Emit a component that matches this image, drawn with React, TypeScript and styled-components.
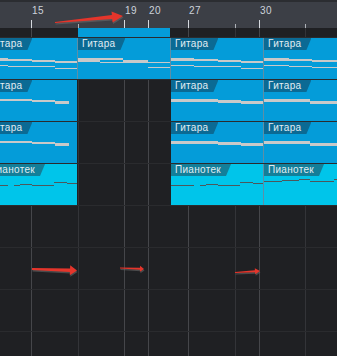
import React from 'react';
import styled, { createGlobalStyle } from 'styled-components';

type Seg = [number, number, number, number]; // x1, x2, y (from clip top), thickness
type Tone = 'guitar' | 'piano';
type ClipData = { tone: Tone; label?: string; lines: Seg[]; joined?: boolean } | null;

const TICKS = [
  { x: 31, label: '15' },
  { x: 78 },
  { x: 124, label: '19' },
  { x: 148, label: '20' },
  { x: 188, label: '27' },
  { x: 235 },
  { x: 259, label: '30' },
  { x: 305 },
];

const gridBg = TICKS.map((t) => {
  const c = t.label ? '#45464a' : '#333438';
  return `linear-gradient(${c}, ${c}) ${t.x}px 0 / 1px 100% no-repeat`;
}).join(', ');

const guitarTop: Seg[] = [
  [0, 23, 20, 3], [23, 47, 21, 2], [47, 70, 22, 2], [70, 92, 23, 2],
  [0, 23, 27, 1], [23, 47, 28, 1], [47, 70, 28, 1], [70, 92, 30, 1],
];
const guitarTopMid: Seg[] = [
  [0, 22, 20, 4], [22, 45, 20, 2], [45, 70, 22, 3], [70, 92, 24, 1],
  [22, 45, 24, 1], [70, 92, 29, 1],
];
const guitarTopEnd: Seg[] = [
  [0, 25, 20, 3], [25, 48, 21, 2], [48, 73, 22, 2], [73, 92, 23, 2],
  [0, 25, 27, 1], [25, 48, 28, 1], [48, 73, 29, 1],
];
const guitarLeft: Seg[] = [[0, 47, 19, 2], [47, 70, 20, 2], [70, 84, 21, 3]];
const guitar: Seg[] = [[0, 47, 19, 3], [47, 70, 20, 3], [70, 92, 21, 3]];
const guitarEnd: Seg[] = [[0, 46, 19, 3], [46, 92, 21, 3]];
const piano: Seg[] = [
  [0, 23, 21, 1], [29, 35, 21, 1], [35, 47, 20, 1], [47, 69, 21, 1], [69, 82, 18, 1], [82, 92, 19, 1],
];
const pianoEnd: Seg[] = [[0, 18, 17, 1], [18, 35, 16, 1], [35, 46, 15, 1], [46, 70, 17, 1], [70, 92, 15, 1]];

const g = (lines: Seg[], joined = false): ClipData => ({ tone: 'guitar', label: 'Гитара', lines, joined });
const p = (lines: Seg[], joined = false): ClipData => ({ tone: 'piano', label: 'Пианотек', lines, joined });

const LANES: { h: number; slots: ClipData[] }[] = [
  { h: 10, slots: [null, { tone: 'guitar', lines: [] }, null, null] },
  { h: 42, slots: [g(guitarTop), g(guitarTopMid, true), g(guitarTop, true), g(guitarTopEnd, true)] },
  { h: 42, slots: [g(guitarLeft), null, g(guitar), g(guitarEnd, true)] },
  { h: 42, slots: [g(guitarLeft), null, g(guitar), g(guitarEnd, true)] },
  { h: 42, slots: [p(piano), null, p(piano), p(pianoEnd, true)] },
  { h: 42, slots: [] },
  { h: 42, slots: [] },
  { h: 42, slots: [] },
  { h: 42, slots: [] },
];

const ARROWS = [
  { tail: [55, 22.5], tip: [123, 16], w0: 1, w1: 4, len: 11, half: 5.5 },
  { tail: [32, 269], tip: [77, 270.5], w0: 2, w1: 3.5, len: 7, half: 5 },
  { tail: [120, 268], tip: [144, 269], w0: 1, w1: 2, len: 4, half: 3 },
  { tail: [235, 272.5], tip: [260, 271], w0: 1.2, w1: 2, len: 5, half: 3 },
];

const GlobalStyle = createGlobalStyle`
  html, body { margin: 0; padding: 0; background: #1f2023; overflow: hidden; }
  * { box-sizing: border-box; }
`;

const Screen = styled.div`
  position: relative;
  width: 337px;
  height: 356px;
  overflow: hidden;
  background: #1f2023;
  font-family: "Liberation Sans", Arial, sans-serif;
`;

const Ruler = styled.div`
  position: relative;
  height: 28px;
  background: #3c3f46;
  border-top: 2px solid #2b2d31;
`;

const Tick = styled.div<{ $x: number; $bar: boolean }>`
  position: absolute;
  bottom: 0;
  left: ${(p) => p.$x}px;
  width: 1px;
  height: ${(p) => (p.$bar ? 8 : 4)}px;
  background: ${(p) => (p.$bar ? '#d6dadf' : '#aeb2b8')};
`;

const TickLabel = styled.span<{ $x: number }>`
  position: absolute;
  top: 4px;
  left: ${(p) => p.$x + 1}px;
  font-size: 10px;
  line-height: 10px;
  letter-spacing: 0.5px;
  color: #cdd3db;
`;

const Tracks = styled.div`
  height: 328px;
  background: ${gridBg};
`;

const Lane = styled.div<{ $h: number }>`
  display: flex;
  height: ${(p) => p.$h}px;
  border-bottom: 1px solid #2a2b2e;
  overflow: hidden;
`;

const Slot = styled.div`
  flex: 0 0 93px;
  &:first-child {
    margin-left: -16px;
  }
`;

const Clip = styled(Slot)<{ $tone: Tone; $joined: boolean }>`
  display: flex;
  flex-direction: column;
  align-items: flex-start;
  background: ${(p) => (p.$tone === 'piano' ? '#00c5ea' : '#049cd9')};
  background-clip: padding-box;
  border-left: 1px solid ${(p) => (p.$joined ? '#5e8ea6' : 'transparent')};
`;

const Tab = styled.span<{ $tone: Tone }>`
  height: 12px;
  padding: 0 10px 0 4px;
  font-size: 10px;
  line-height: 12px;
  letter-spacing: 0.3px;
  white-space: nowrap;
  color: #e2edf3;
  background: ${(p) => (p.$tone === 'piano' ? '#137f99' : '#0b6a94')};
  clip-path: polygon(0 0, 100% 0, calc(100% - 5px) 100%, 0 100%);
`;

const LineArt = styled.svg`
  display: block;
  flex: none;
`;

const Overlay = styled.svg`
  position: absolute;
  left: 0;
  top: 0;
  pointer-events: none;
`;

function arrowPoints(a: (typeof ARROWS)[number], dx = 0, dy = 0) {
  const [tx, ty] = a.tail;
  const [hx, hy] = a.tip;
  const l = Math.hypot(hx - tx, hy - ty);
  const ux = (hx - tx) / l;
  const uy = (hy - ty) / l;
  const nx = -uy;
  const ny = ux;
  const bx = hx - ux * a.len;
  const by = hy - uy * a.len;
  const pts = [
    [tx + (nx * a.w0) / 2, ty + (ny * a.w0) / 2],
    [bx + (nx * a.w1) / 2, by + (ny * a.w1) / 2],
    [bx + nx * a.half, by + ny * a.half],
    [hx, hy],
    [bx - nx * a.half, by - ny * a.half],
    [bx - (nx * a.w1) / 2, by - (ny * a.w1) / 2],
    [tx - (nx * a.w0) / 2, ty - (ny * a.w0) / 2],
  ];
  return pts.map(([x, y]) => `${(x + dx).toFixed(1)},${(y + dy).toFixed(1)}`).join(' ');
}

const ClipView = ({ clip, h }: { clip: NonNullable<ClipData>; h: number }) => {
  const top = clip.label ? 12 : 0;
  const lineColor = clip.tone === 'piano' ? '#4d575b' : '#c9c9c9';
  return (
    <Clip $tone={clip.tone} $joined={!!clip.joined}>
      {clip.label && <Tab $tone={clip.tone}>{clip.label}</Tab>}
      {clip.lines.length > 0 && (
        <LineArt width={92} height={h - 1 - top}>
          {clip.lines.map(([x1, x2, y, t], i) => (
            <rect key={i} x={x1} y={y - top} width={x2 - x1} height={t} fill={lineColor} />
          ))}
        </LineArt>
      )}
    </Clip>
  );
};

export default function App() {
  return (
    <Screen>
      <GlobalStyle />
      <Ruler>
        {TICKS.map((t) => (
          <React.Fragment key={t.x}>
            <Tick $x={t.x} $bar={!!t.label} />
            {t.label && <TickLabel $x={t.x}>{t.label}</TickLabel>}
          </React.Fragment>
        ))}
      </Ruler>
      <Tracks>
        {LANES.map((lane, i) => (
          <Lane key={i} $h={lane.h}>
            {lane.slots.map((clip, j) =>
              clip ? <ClipView key={j} clip={clip} h={lane.h} /> : <Slot key={j} />
            )}
          </Lane>
        ))}
      </Tracks>
      <Overlay width={337} height={356}>
        {ARROWS.map((a, i) => (
          <g key={i}>
            <polygon points={arrowPoints(a, 0.5, 1.5)} fill="rgba(110,110,110,0.55)" />
            <polygon points={arrowPoints(a)} fill="#e5352b" />
          </g>
        ))}
      </Overlay>
    </Screen>
  );
}
